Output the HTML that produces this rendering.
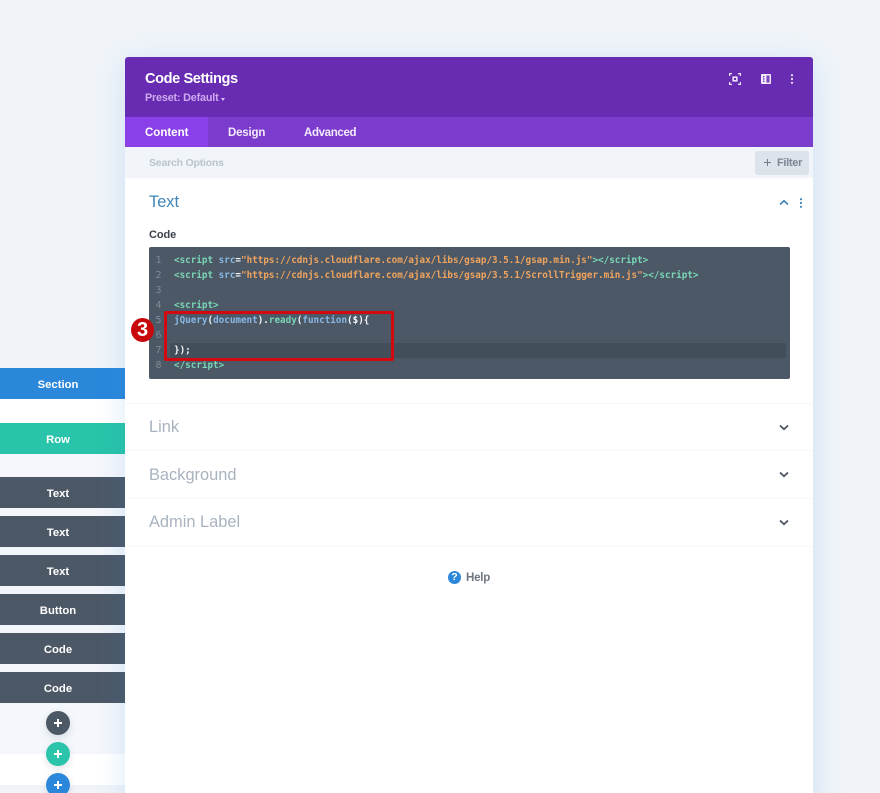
<!DOCTYPE html>
<html lang="en">
<head>
<meta charset="utf-8">
<title>Code Settings</title>
<style>
html,body{margin:0;padding:0;background:#f0f4f9;}
#page{position:relative;width:880px;height:793px;overflow:hidden;background:#f0f4f9;font-family:"Liberation Sans",sans-serif;}
#page div,#page svg{position:absolute;}
.t{white-space:nowrap;line-height:16px;height:16px;}
.side{left:0;width:125px;height:31px;color:#fff;font-weight:700;font-size:11.3px;line-height:34px;text-align:center;background:#4c5866;text-indent:-9px;box-sizing:border-box;}
.code{left:174px;font-family:"DejaVu Sans Mono","Liberation Mono",monospace;font-weight:700;font-size:9.28px;line-height:15px;height:15px;white-space:pre;color:#fff;}
.num{left:149px;width:19px;text-align:center;font-family:"DejaVu Sans Mono","Liberation Mono",monospace;font-size:10px;line-height:15px;height:15px;color:#7f8a97;}
.o{color:#f0a45d}.b{color:#8ab8e6}.w{color:#f4f7fa}.tl{color:#7ad6b6}
.sep{left:125px;width:688px;height:1px;background:#f6f7f9;}
.lab{left:149px;font-size:16.4px;line-height:20px;height:20px;color:#a8b3c0;white-space:nowrap;}
.circ{left:46px;width:24px;height:24px;border-radius:50%;box-shadow:0 3px 8px rgba(60,80,110,.16);}
.circ i{position:absolute;left:8px;top:11px;width:8px;height:2px;background:#fff;}
.circ b{position:absolute;left:11px;top:8px;width:2px;height:8px;background:#fff;}
</style>
</head>
<body>
<div id="page">
  <!-- left column backgrounds -->
  <div style="left:0;top:399px;width:125px;height:55px;background:#fff;"></div>
  <div style="left:0;top:454px;width:125px;height:23px;background:#f5f7fc;"></div>
  <div style="left:0;top:508px;width:125px;height:117px;background:#f3f6fb;"></div>
  <div style="left:0;top:625px;width:125px;height:47px;background:#f3f6fb;"></div>
  <div style="left:0;top:703px;width:125px;height:51px;background:#f4f7fb;"></div>
  <div style="left:0;top:754px;width:125px;height:31px;background:#fff;"></div>

  <div class="side" style="top:368px;background:#2b87da;">Section</div>
  <div class="side" style="top:423px;background:#29c4a9;">Row</div>
  <div class="side" style="top:477px;">Text</div>
  <div class="side" style="top:516px;">Text</div>
  <div class="side" style="top:555px;">Text</div>
  <div class="side" style="top:594px;">Button</div>
  <div class="side" style="top:633px;">Code</div>
  <div class="side" style="top:672px;">Code</div>

  <div class="circ" style="top:711px;background:#4c5866;"><i></i><b></b></div>
  <div class="circ" style="top:742px;background:#29c4a9;"><i></i><b></b></div>
  <div class="circ" style="top:773px;background:#2b87da;"><i></i><b></b></div>

  <!-- panel -->
  <div style="left:125px;top:57px;width:688px;height:760px;background:#fff;border-radius:3px 3px 0 0;box-shadow:0 5px 30px rgba(43,135,218,.17);"></div>
  <div style="left:125px;top:57px;width:688px;height:60px;background:#672cb1;border-radius:3px 3px 0 0;"></div>
  <div class="t" style="left:145px;top:71px;font-size:14.6px;font-weight:700;color:#fff;letter-spacing:-.42px;">Code Settings</div>
  <div class="t" style="left:145px;top:90px;font-size:10.8px;font-weight:700;color:#cfa9f0;letter-spacing:-.18px;">Preset: Default</div>
  <div style="left:221px;top:98px;width:0;height:0;border-left:2.5px solid transparent;border-right:2.5px solid transparent;border-top:3px solid #d8c0f2;"></div>

  <svg style="left:729px;top:73px;" width="12" height="12" viewBox="0 0 12 12" fill="none" stroke="#f0e6fa" stroke-width="1.2"><path d="M.6 3V.6H3M9 .6h2.4V3M11.4 9v2.4H9M3 11.4H.6V9"/><rect x="3.4" y="3.4" width="5.2" height="5.2" fill="#f0e6fa" stroke="none"/><rect x="5" y="5" width="2" height="2" fill="#672cb1" stroke="none"/></svg>
  <svg style="left:761px;top:74px;" width="10" height="10" viewBox="0 0 10 10"><rect width="10" height="10" rx="1" fill="#f4ecfb"/><rect x="5.4" y="1.4" width="3.2" height="7.2" fill="#7f4cc0"/><rect x="2" y="2" width="1.4" height="1.4" fill="#672cb1"/><rect x="2" y="4.3" width="1.4" height="1.4" fill="#672cb1"/><rect x="2" y="6.6" width="1.4" height="1.4" fill="#672cb1"/></svg>
  <svg style="left:790px;top:74px;" width="4" height="10" viewBox="0 0 4 10" fill="#f0e6fa"><circle cx="2" cy="1.2" r="1.1"/><circle cx="2" cy="5" r="1.1"/><circle cx="2" cy="8.8" r="1.1"/></svg>

  <!-- tabs -->
  <div style="left:125px;top:117px;width:688px;height:30px;background:#7b3bcd;"></div>
  <div style="left:125px;top:117px;width:83px;height:30px;background:#8a3fe8;"></div>
  <div class="t" style="left:145px;top:125px;font-size:11.5px;font-weight:700;color:#fff;">Content</div>
  <div class="t" style="left:228px;top:125px;font-size:11.5px;font-weight:700;color:#f3eafc;letter-spacing:-.2px;">Design</div>
  <div class="t" style="left:304px;top:125px;font-size:11.5px;font-weight:700;color:#f3eafc;letter-spacing:-.35px;">Advanced</div>

  <!-- search -->
  <div style="left:125px;top:147px;width:688px;height:31px;background:#f1f5f9;"></div>
  <div class="t" style="left:149px;top:155px;font-size:10.5px;font-weight:700;color:#b9c3ce;letter-spacing:-.2px;">Search Options</div>
  <div style="left:755px;top:151px;width:54px;height:24px;background:#dde3ea;border-radius:3px;"></div>
  <div style="left:764px;top:161.7px;width:7px;height:1.8px;background:#6f7b89;"></div>
  <div style="left:766.6px;top:159px;width:1.8px;height:7px;background:#6f7b89;"></div>
  <div class="t" style="left:777px;top:155px;font-size:11px;font-weight:700;color:#7b8795;letter-spacing:-.3px;">Filter</div>

  <!-- Text section -->
  <div class="t" style="left:149px;top:192px;font-size:16.4px;line-height:20px;height:20px;color:#3d85b8;">Text</div>
  <svg style="left:779px;top:199px;" width="10" height="7" viewBox="0 0 10 7" fill="none" stroke="#3d85b8" stroke-width="1.7"><path d="M1 5.5 5 1.8 9 5.5"/></svg>
  <svg style="left:799px;top:198px;" width="4" height="10" viewBox="0 0 4 10" fill="#3d85b8"><circle cx="2" cy="1.2" r="1.1"/><circle cx="2" cy="5" r="1.1"/><circle cx="2" cy="8.8" r="1.1"/></svg>
  <div class="t" style="left:149px;top:227px;font-size:11px;font-weight:700;color:#3c434b;letter-spacing:-.1px;">Code</div>

  <!-- code box -->
  <div style="left:149px;top:247px;width:641px;height:132px;background:#4c5866;border-radius:2px;"></div>
  <div style="left:170px;top:343px;width:616px;height:15px;background:#434e5b;"></div>

  <div class="num" style="top:253px;">1</div>
  <div class="num" style="top:268px;">2</div>
  <div class="num" style="top:283px;">3</div>
  <div class="num" style="top:298px;">4</div>
  <div class="num" style="top:313px;">5</div>
  <div class="num" style="top:328px;">6</div>
  <div class="num" style="top:343px;">7</div>
  <div class="num" style="top:358px;">8</div>

  <div class="code" style="top:253px;"><span class="tl">&lt;script</span> <span class="b">src</span><span class="w">=</span><span class="o">"https://cdnjs.cloudflare.com/ajax/libs/gsap/3.5.1/gsap.min.js"</span><span class="tl">&gt;&lt;/script&gt;</span></div>
  <div class="code" style="top:268px;"><span class="tl">&lt;script</span> <span class="b">src</span><span class="w">=</span><span class="o">"https://cdnjs.cloudflare.com/ajax/libs/gsap/3.5.1/ScrollTrigger.min.js"</span><span class="tl">&gt;&lt;/script&gt;</span></div>
  <div class="code" style="top:298px;"><span class="tl">&lt;script&gt;</span></div>
  <div class="code" style="top:313px;"><span class="b">jQuery</span><span class="w">(</span><span class="b">document</span><span class="w">).</span><span class="tl">ready</span><span class="w">(</span><span class="b">function</span><span class="w">($){</span></div>
  <div class="code" style="top:343px;"><span class="w">});</span></div>
  <div class="code" style="top:358px;"><span class="tl">&lt;/script&gt;</span></div>

  <!-- annotation -->
  <div style="left:164px;top:311px;width:230px;height:50px;box-sizing:border-box;border:3px solid #d2090f;border-radius:2px;"></div>
  <div style="left:131px;top:318px;width:23px;height:24px;border-radius:50%;background:#c8070d;color:#fff;font-size:20px;font-weight:700;line-height:24px;text-align:center;">3</div>

  <!-- collapsed sections -->
  <div class="sep" style="top:403px;"></div>
  <div class="lab" style="top:417px;">Link</div>
  <div class="sep" style="top:450px;"></div>
  <div class="lab" style="top:465px;">Background</div>
  <div class="sep" style="top:498px;"></div>
  <div class="lab" style="top:512px;">Admin Label</div>
  <div class="sep" style="top:546px;"></div>

  <svg style="left:779px;top:424px;" width="10" height="7" viewBox="0 0 10 7" fill="none" stroke="#454f5b" stroke-width="1.7"><path d="M1 1.5 5 5.2 9 1.5"/></svg>
  <svg style="left:779px;top:471px;" width="10" height="7" viewBox="0 0 10 7" fill="none" stroke="#454f5b" stroke-width="1.7"><path d="M1 1.5 5 5.2 9 1.5"/></svg>
  <svg style="left:779px;top:519px;" width="10" height="7" viewBox="0 0 10 7" fill="none" stroke="#454f5b" stroke-width="1.7"><path d="M1 1.5 5 5.2 9 1.5"/></svg>

  <!-- help -->
  <div style="left:448px;top:571px;width:13px;height:13px;border-radius:50%;background:#2b87da;color:#fff;font-size:10.5px;font-weight:700;line-height:13px;text-align:center;">?</div>
  <div class="t" style="left:466px;top:570px;font-size:11.5px;font-weight:700;color:#6d7680;letter-spacing:-.2px;">Help</div>
</div>
</body>
</html>
